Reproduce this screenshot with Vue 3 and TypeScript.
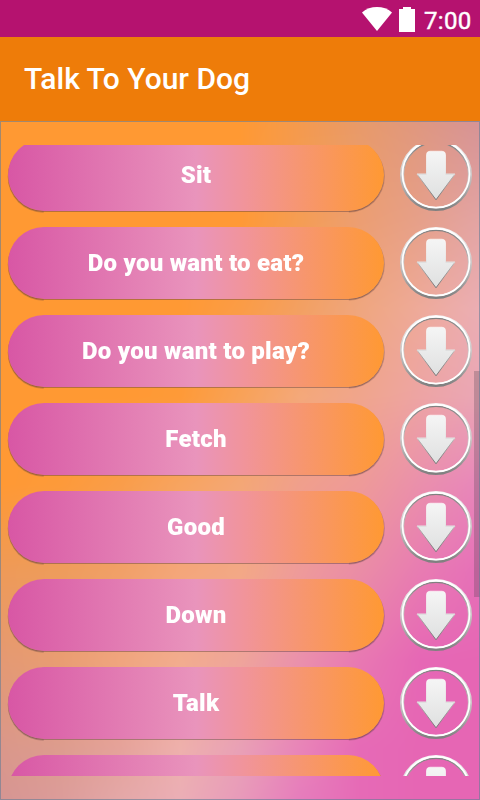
<script setup lang="ts">
import { onMounted, ref } from 'vue'

const phrases: string[] = [
  'Sit',
  'Do you want to eat?',
  'Do you want to play?',
  'Fetch',
  'Good',
  'Down',
  'Talk',
  'Bark',
]

// Colour mesh of the backdrop: rows top to bottom, nodes left to right.
const meshRows: number[] = [0, 99, 187, 275, 363, 451, 539, 627, 679]
const mesh: string[] = [
  'ff9933 ff9933 ff9933 ff9933 ff9933 f49a4e e89a69 df9780 d69396',
  'ff9933 ff9933 ff9933 ff9933 ff9936 f59d54 ec9e72 e6a08a e3a4a4',
  'ff9933 ff9933 ff9933 ff9934 fb9c46 f3a062 efa67e eeaa9a ebaeb4',
  'ff9933 ff9933 ff9933 fe9a38 f8a258 f4a87a f0a58c eda4a4 eaa6b6',
  'ff9934 fd9a3a f99d4a f7a460 f4a776 f09f8c ee9a98 ea8fac e886bb',
  'ee9a58 ee9c5c f1a068 f4a67a f3a886 ee9a9a ea8ca6 e87bb2 e66fb8',
  'e49973 e99d72 f0a57e f2ac8e efa49a ea90ac e878b2 e667b5 e666b4',
  'da978a dd9c8e e5a29a eeb0ac e9a0b6 e884b8 e66ab6 e666b4 e666b4',
  'd69592 dc9c9a e4a8a8 ebaeb6 e89aba e67cbc e66ab6 e666b4 e666b4',
]

const backdrop = ref<HTMLCanvasElement | null>(null)

function parseHex(hex: string): number[] {
  return [0, 2, 4].map((i) => parseInt(hex.slice(i, i + 2), 16))
}

onMounted(() => {
  const canvas = backdrop.value
  const ctx = canvas?.getContext('2d')
  if (!canvas || !ctx) return
  const nodes = mesh.map((row) => row.split(' ').map(parseHex))
  const image = ctx.createImageData(canvas.width, canvas.height)
  let r = 0
  for (let y = 0; y < canvas.height; y++) {
    while (r < meshRows.length - 2 && y >= meshRows[r + 1]) r++
    const v = (y - meshRows[r]) / (meshRows[r + 1] - meshRows[r])
    for (let x = 0; x < canvas.width; x++) {
      const c = Math.min(7, Math.floor(x / 60))
      const u = x / 60 - c
      const p = (y * canvas.width + x) * 4
      for (let k = 0; k < 3; k++) {
        const top = nodes[r][c][k] * (1 - u) + nodes[r][c + 1][k] * u
        const bottom = nodes[r + 1][c][k] * (1 - u) + nodes[r + 1][c + 1][k] * u
        image.data[p + k] = top * (1 - v) + bottom * v
      }
      image.data[p + 3] = 255
    }
  }
  ctx.putImageData(image, 0, 0)
})
</script>

<template>
  <div class="screen">
    <svg class="defs" width="0" height="0" aria-hidden="true">
      <defs>
        <linearGradient id="arrowFill" x1="0" y1="0" x2="0" y2="1">
          <stop offset="0" stop-color="#f5f5f5" />
          <stop offset="1" stop-color="#dfe0e0" />
        </linearGradient>
        <linearGradient id="arrowEdge" x1="0" y1="0" x2="0" y2="1">
          <stop offset="0" stop-color="#ffffff" stop-opacity="0.6" />
          <stop offset="0.46" stop-color="#e4e4e4" />
          <stop offset="0.52" stop-color="#b4b2b2" />
          <stop offset="1" stop-color="#767676" />
        </linearGradient>
        <linearGradient id="ringShade" x1="0" y1="0" x2="0" y2="1">
          <stop offset="0" stop-color="#f4f4f4" />
          <stop offset="0.5" stop-color="#cbc8c8" />
          <stop offset="1" stop-color="#808080" />
        </linearGradient>
        <linearGradient id="ringInner" x1="0" y1="0" x2="0" y2="1">
          <stop offset="0" stop-color="#808080" />
          <stop offset="0.5" stop-color="#c4bebe" />
          <stop offset="1" stop-color="#ffffff" />
        </linearGradient>
      </defs>
    </svg>

    <header class="status">
      <svg class="wifi" width="30" height="24" viewBox="0 0 30 24">
        <path d="M0 5.5C8-1.8 22-1.8 30 5.5L15 24Z" fill="#fff" />
      </svg>
      <svg class="battery" width="16" height="25" viewBox="0 0 16 25">
        <path d="M4 0h8v2h4v23H0V2h4z" fill="#fff" />
      </svg>
      <span class="clock">7:00</span>
    </header>

    <div class="appbar"><h1>Talk To Your Dog</h1></div>

    <main class="content">
      <canvas ref="backdrop" class="backdrop" width="480" height="679"></canvas>
      <div class="list">
        <div v-for="phrase in phrases" :key="phrase" class="row">
          <button class="pill" type="button"><span class="label">{{ phrase }}</span></button>
          <svg class="download" width="72" height="72" viewBox="0 0 72 72">
            <circle cx="36" cy="36" r="34.2" fill="none" stroke="url(#ringShade)" stroke-width="3.6" />
            <circle cx="36" cy="36" r="32.6" fill="none" stroke="url(#ringInner)" stroke-width="1.4" />
            <circle cx="36" cy="35.1" r="33.5" fill="none" stroke="#fff" stroke-width="1.7" />
            <path
              d="M30 12.2H42Q45.5 12.2 45.5 15.7V35H55L36 60.8L17 35H26.5V15.7Q26.5 12.2 30 12.2Z"
              fill="url(#arrowFill)"
              stroke="url(#arrowEdge)"
              stroke-width="1"
              stroke-linejoin="round"
            />
          </svg>
        </div>
      </div>
      <div class="scrollbar"></div>
    </main>
  </div>
</template>

<style>
body {
  margin: 0;
}
</style>

<style scoped>
.screen {
  width: 480px;
  height: 800px;
  display: flex;
  flex-direction: column;
  overflow: hidden;
  font-family: Roboto, 'Liberation Sans', sans-serif;
  color: #fff;
}
.defs {
  position: absolute;
}
.status {
  height: 37px;
  flex: none;
  box-sizing: border-box;
  padding: 7px 9px 0 0;
  display: flex;
  justify-content: flex-end;
  align-items: flex-start;
  background: #b5126f;
}
.battery {
  margin: 0 9px 0 7px;
}
.clock {
  width: 47px;
  font-size: 24px;
  line-height: 28px;
  font-weight: 400;
  letter-spacing: 0.3px;
  -webkit-text-stroke: 0.45px #fff;
}
.appbar {
  height: 84px;
  flex: none;
  display: flex;
  align-items: center;
  padding-left: 24px;
  background: #ee7c09;
}
h1 {
  margin: 0;
  font-size: 30px;
  line-height: 34px;
  font-weight: 500;
}
.content {
  position: relative;
  height: 679px;
  box-sizing: border-box;
  padding: 24px 0;
}
.backdrop {
  position: absolute;
  inset: 0;
}
.content::after {
  content: '';
  position: absolute;
  inset: 0;
  border: 1px solid rgba(100, 125, 150, 0.6);
  pointer-events: none;
}
.list {
  position: relative;
  height: 631px;
  overflow: hidden;
  display: flex;
  flex-direction: column;
  gap: 16px;
}
.row {
  flex: none;
  display: flex;
  justify-content: space-between;
  padding: 0 8px;
}
.row:first-child {
  margin-top: -6px;
}
.pill {
  position: relative;
  z-index: 0;
  width: 376px;
  height: 72px;
  padding: 0;
  border: 0;
  border-radius: 36px;
  background: linear-gradient(90deg, #d857a5, #e994bc 50%, #f1949a 63%, #ff9933 100%);
  box-shadow: 0 1px 0 rgba(96, 64, 64, 0.45);
  font: 900 24px/28px Roboto, 'Liberation Sans', sans-serif;
  color: #fff;
}
.pill::before,
.pill::after {
  content: '';
  position: absolute;
  top: 0;
  width: 36px;
  height: 72px;
}
.pill::before {
  left: 0;
  border-radius: 36px 0 0 36px;
  box-shadow: -0.3px 1.7px 0 rgba(96, 64, 64, 0.32);
  clip-path: inset(0 0 -3px -3px);
}
.pill::after {
  right: 0;
  border-radius: 0 36px 36px 0;
  box-shadow: 0.8px 1.5px 0 rgba(96, 64, 64, 0.32);
  clip-path: inset(0 -3px -3px 0);
}
.label {
  letter-spacing: 0.25px;
}
.download {
  display: block;
}
.scrollbar {
  position: absolute;
  right: 0;
  top: 250px;
  width: 6px;
  height: 226px;
  background: rgba(80, 70, 80, 0.28);
}
</style>
